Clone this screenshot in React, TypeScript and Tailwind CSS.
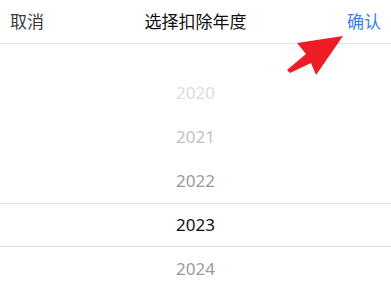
const years = [
  { y: "2020", c: "text-[#dcdcdc]" },
  { y: "2021", c: "text-[#c2c2c2]" },
  { y: "2022", c: "text-[#9a9a9a]" },
  { y: "2023", c: "text-[#111111]" },
  { y: "2024", c: "text-[#9a9a9a]" },
];

function Arrow() {
  return (
    <svg className="absolute left-0 top-0" width="391" height="100" viewBox="0 0 391 100">
      <polygon
        points="343,36 297,43 306,54 287,70 290,73 311,63 316,75"
        fill="#ee1d25"
      />
    </svg>
  );
}

export default function App() {
  return (
    <div
      className="relative h-[303px] w-[391px] overflow-hidden bg-white"
      style={{ fontFamily: '"Noto Sans", "Noto Sans CJK SC", sans-serif' }}
    >
      <div className="flex h-[44px] items-center justify-between border-b border-[#e4e4e4] px-[10px] text-[17px]">
        <span className="text-[#3a3a3a]">取消</span>
        <span className="text-[#111111]">选择扣除年度</span>
        <span className="text-[#3a7ef0]">确认</span>
      </div>
      <div className="pt-[27px]">
        {years.map((it) => (
          <div
            key={it.y}
            className={`flex h-[44px] items-center justify-center text-[17px] ${it.c} ${
              it.y === "2023" ? "border-y border-[#e2e2e2]" : ""
            }`}
          >
            {it.y}
          </div>
        ))}
      </div>
      <Arrow />
    </div>
  );
}
